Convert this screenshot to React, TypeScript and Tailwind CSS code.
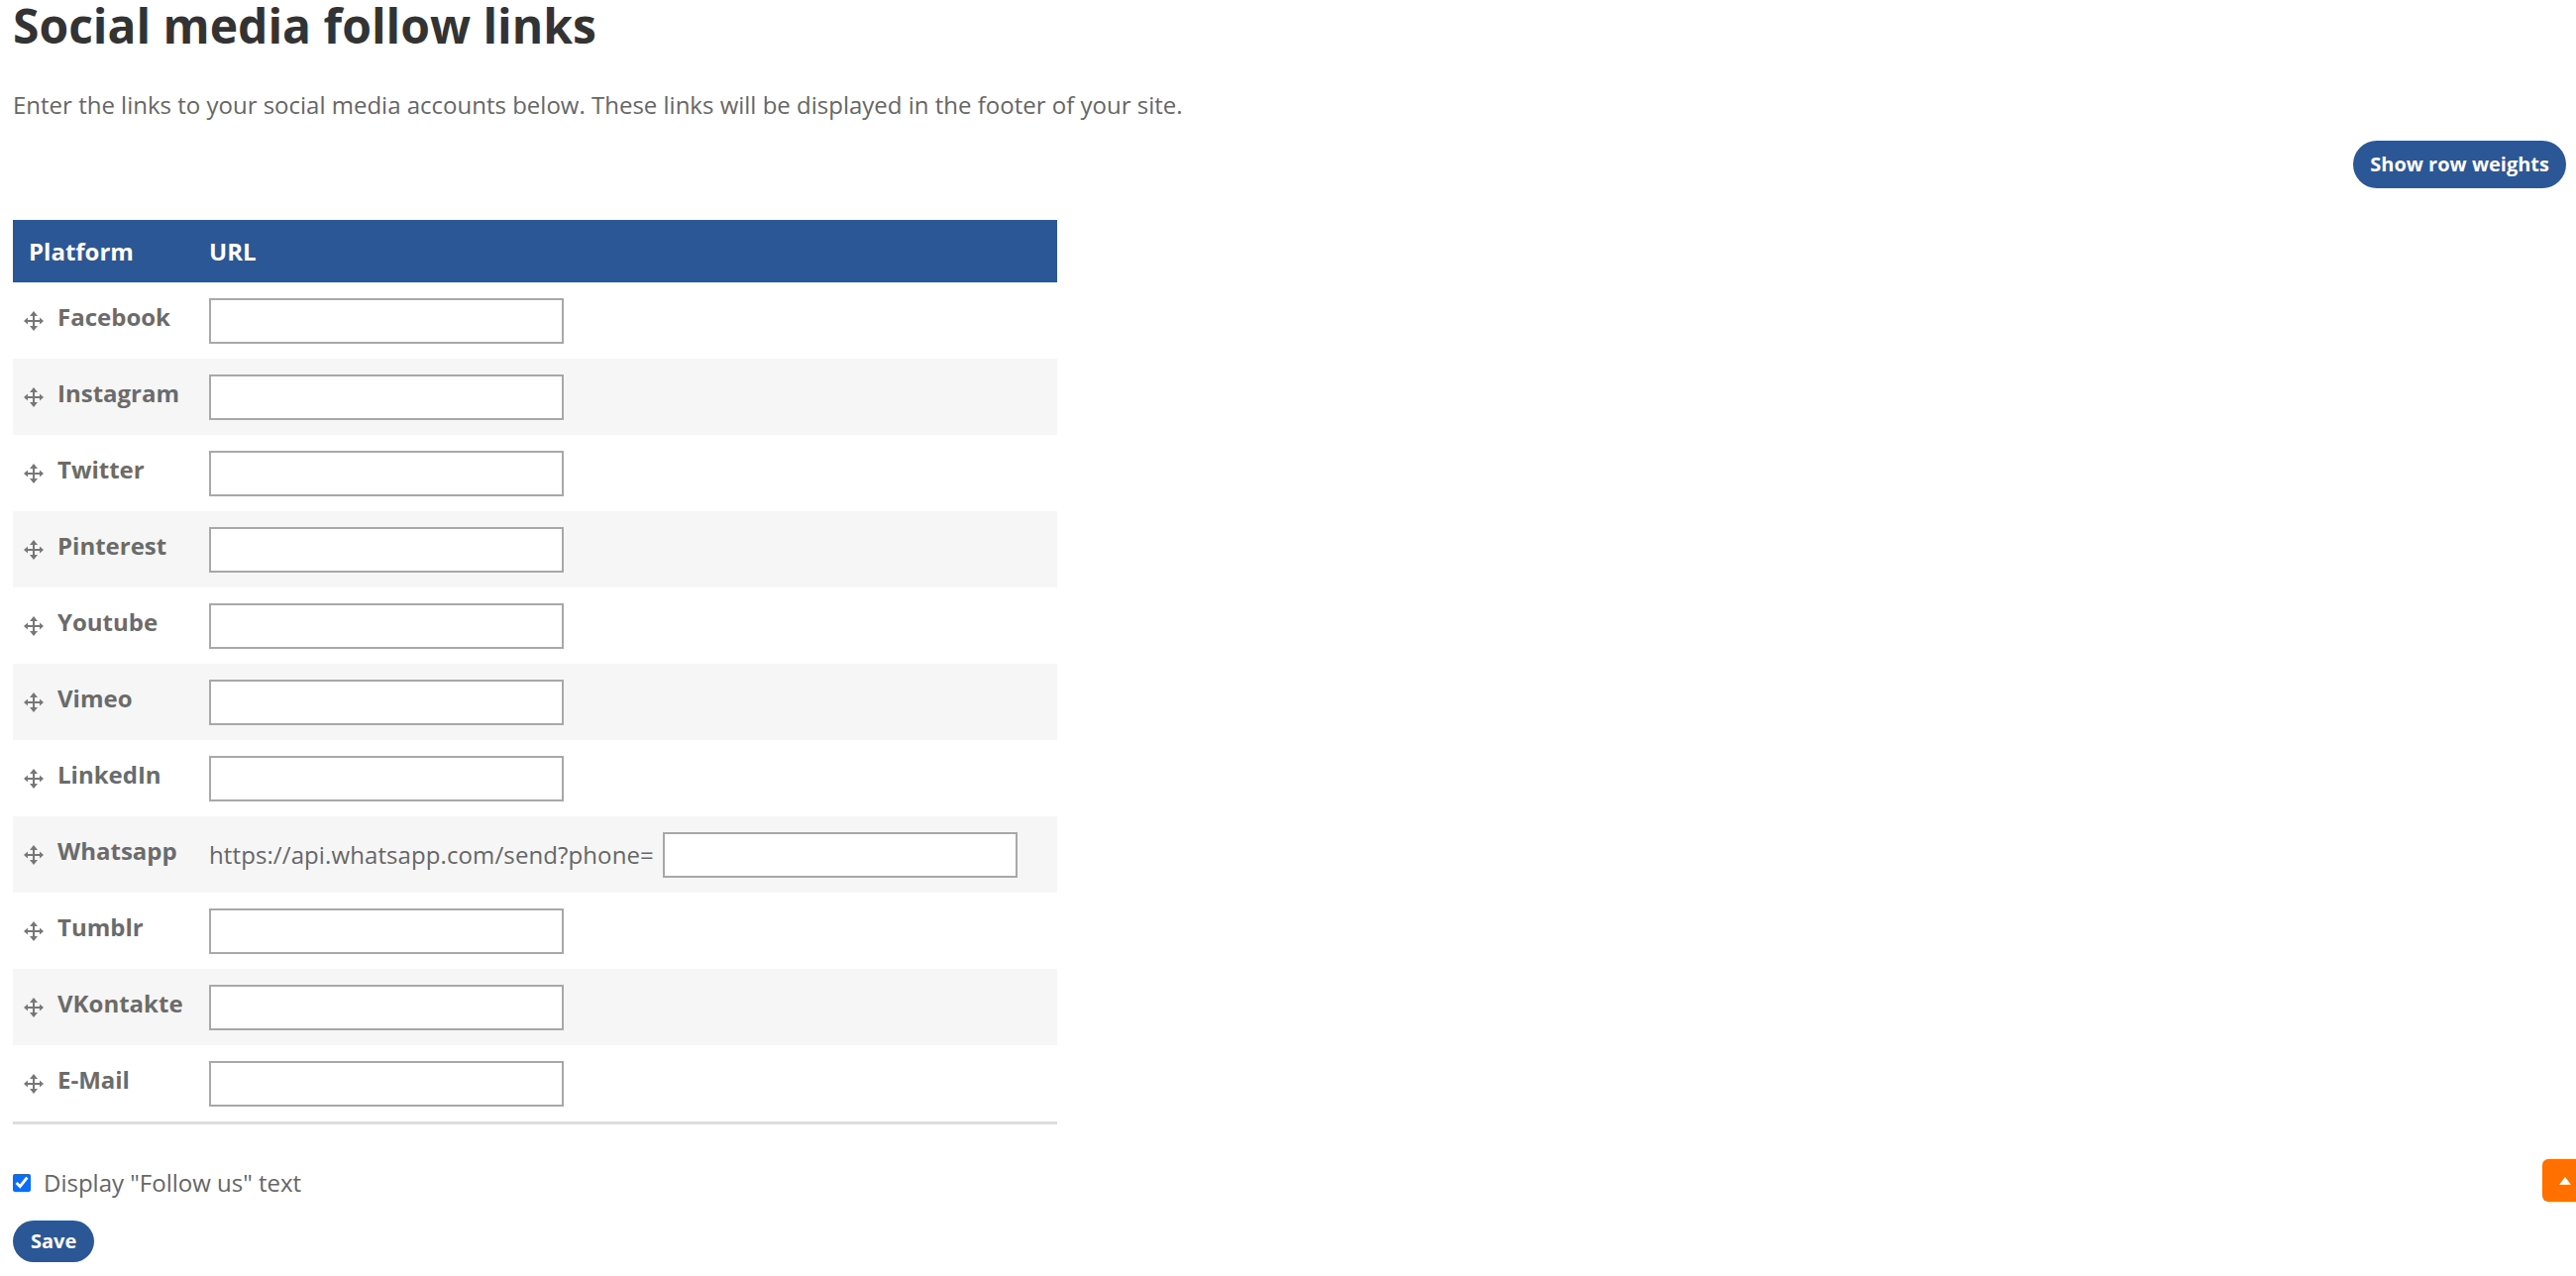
import { useState } from 'react';

const platforms = [
  'Facebook',
  'Instagram',
  'Twitter',
  'Pinterest',
  'Youtube',
  'Vimeo',
  'LinkedIn',
  'Whatsapp',
  'Tumblr',
  'VKontakte',
  'E-Mail',
];

function DragHandle() {
  return (
    <svg width="20" height="20" viewBox="0 0 20 20" className="shrink-0 text-[#777]" fill="currentColor">
      <rect x="9" y="4" width="2" height="12" />
      <rect x="3" y="9" width="14" height="2" />
      <path d="M10 0 L14 5 L6 5 Z" />
      <path d="M10 20 L14 15 L6 15 Z" />
      <path d="M0 10 L4 6.5 L4 13.5 Z" />
      <path d="M20 10 L16 6.5 L16 13.5 Z" />
    </svg>
  );
}

function UrlInput() {
  return (
    <input
      type="text"
      className="h-[46px] w-[358px] border-2 border-[#a8a8a8] bg-white px-2 text-[21px] outline-none"
    />
  );
}

export default function App() {
  const [followUs, setFollowUs] = useState(true);

  return (
    <div className="min-h-screen bg-white pl-[13px] pr-[10px] font-['Open_Sans',sans-serif] text-[#666]">
      <h1 className="text-[48px] font-bold leading-[52px] text-[#333]">Social media follow links</h1>

      <p className="mt-[38px] text-[24px] leading-[32px]">
        Enter the links to your social media accounts below. These links will be displayed in the footer of your site.
      </p>

      <div className="mt-[20px] flex justify-end">
        <button className="h-[48px] rounded-full bg-[#2b5797] px-[17px] text-[20px] font-bold text-white">
          Show row weights
        </button>
      </div>

      <div className="mt-[32px] w-[1054px] border-b-[3px] border-[#ddd]">
        <div className="flex h-[63px] items-center bg-[#2b5797] text-[24px] font-bold text-white">
          <div className="w-[198px] pl-4">Platform</div>
          <div>URL</div>
        </div>
        {platforms.map((name, i) => (
          <div
            key={name}
            className={`flex h-[77px] items-center ${i % 2 === 1 ? 'bg-[#f6f6f6]' : 'bg-white'}`}
          >
            <div className="flex w-[198px] items-center gap-[14px] pl-[11px]">
              <DragHandle />
              <span className="pb-[7px] text-[24px] font-bold text-[#6b6b6b]">{name}</span>
            </div>
            {name === 'Whatsapp' ? (
              <div className="flex items-center gap-[9px]">
                <span className="text-[24px] tracking-[0.1px]">https://api.whatsapp.com/send?phone=</span>
                <UrlInput />
              </div>
            ) : (
              <UrlInput />
            )}
          </div>
        ))}
      </div>

      <label className="mt-[44px] flex items-center gap-[13px] text-[24px] leading-[30px]">
        <input
          type="checkbox"
          checked={followUs}
          onChange={(e) => setFollowUs(e.target.checked)}
          className="h-[18px] w-[18px] accent-[#0b6cf5]"
        />
        Display "Follow us" text
      </label>

      <button className="mt-[23px] h-[42px] rounded-full bg-[#2b5797] px-[18px] text-[20px] font-bold text-white">
        Save
      </button>

      <button
        aria-label="Back to top"
        className="fixed bottom-[75px] right-[-12px] flex h-[43px] w-[46px] items-center justify-center rounded-[6px] bg-[#ff7000]"
      >
        <span className="h-0 w-0 border-x-[6px] border-b-[8px] border-x-transparent border-b-white" />
      </button>
    </div>
  );
}
